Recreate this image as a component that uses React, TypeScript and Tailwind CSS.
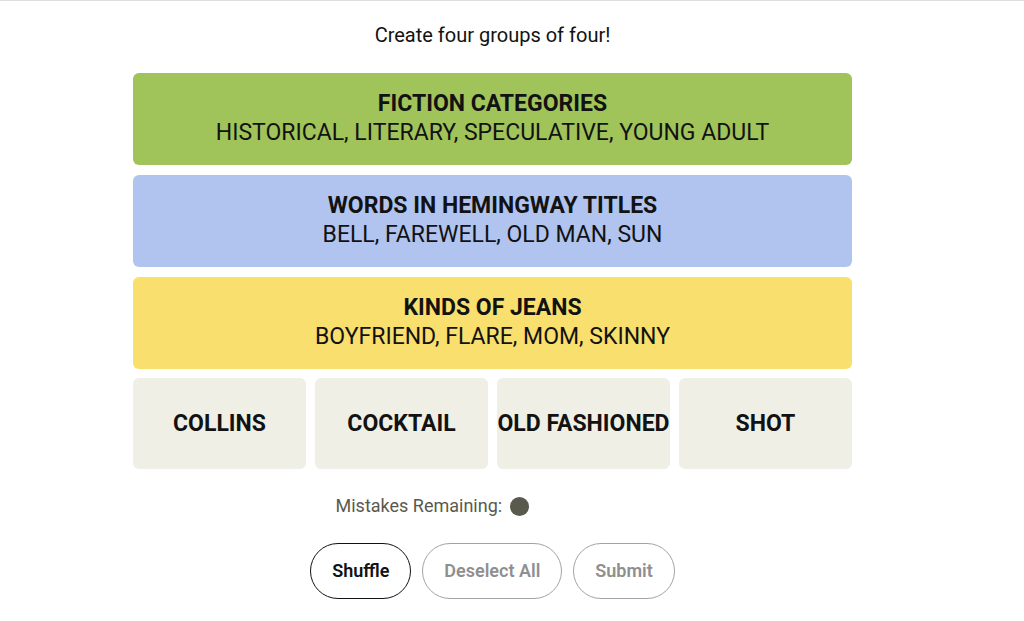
import { useState } from 'react'
import { cva } from 'class-variance-authority'
import { clsx } from 'clsx'

interface Group {
  title: string
  words: string[]
  color: 'green' | 'blue' | 'yellow'
}

const solvedGroups: Group[] = [
  { title: 'Fiction Categories', words: ['Historical', 'Literary', 'Speculative', 'Young Adult'], color: 'green' },
  { title: 'Words in Hemingway Titles', words: ['Bell', 'Farewell', 'Old Man', 'Sun'], color: 'blue' },
  { title: 'Kinds of Jeans', words: ['Boyfriend', 'Flare', 'Mom', 'Skinny'], color: 'yellow' },
]

const solvedCard = cva(
  'flex min-h-[92px] flex-col items-center justify-center rounded-md px-2 pb-0.5 text-center text-[23px] leading-[29px] uppercase',
  {
    variants: {
      color: {
        green: 'bg-[#a0c35a]',
        blue: 'bg-[#b0c4ef]',
        yellow: 'bg-[#f9df6d]',
      },
    },
  }
)

const pill =
  'h-14 rounded-full border px-[21px] pb-0.5 text-[18px] font-semibold border-[#121212] text-[#121212] disabled:border-[#a3a3a3] disabled:text-[#8f8f8f]'

export default function App() {
  const [words, setWords] = useState(['Collins', 'Cocktail', 'Old Fashioned', 'Shot'])
  const [selected, setSelected] = useState<string[]>([])
  const mistakesRemaining = 1

  const toggle = (word: string) => {
    setSelected((prev) => (prev.includes(word) ? prev.filter((w) => w !== word) : [...prev, word]))
  }

  const shuffle = () => {
    setWords((prev) => [...prev].sort(() => Math.random() - 0.5))
  }

  return (
    <main className="flex flex-col items-center border-t border-[#dfdfdf] bg-white pt-5 pb-5 pr-[39px] font-['Roboto','Liberation_Sans',sans-serif] text-[#121212]">
      <h1 className="text-[20px] leading-7">Create four groups of four!</h1>

      <div className="mt-6 flex w-full max-w-[719px] flex-col gap-[9px]">
        <div className="flex flex-col gap-2.5">
          {solvedGroups.map((group) => (
            <section key={group.title} className={solvedCard({ color: group.color })}>
              <h2 className="font-bold">{group.title}</h2>
              <p>{group.words.join(', ')}</p>
            </section>
          ))}
        </div>

        <div className="grid grid-cols-4 gap-[9px]">
          {words.map((word) => (
            <button
              key={word}
              type="button"
              aria-pressed={selected.includes(word)}
              onClick={() => toggle(word)}
              className={clsx(
                'h-[91px] rounded-md text-[23px] leading-[29px] font-bold whitespace-nowrap uppercase',
                selected.includes(word) ? 'bg-[#5a594e] text-white' : 'bg-[#efefe6]'
              )}
            >
              {word}
            </button>
          ))}
        </div>
      </div>

      <div className="mt-6 flex w-full max-w-[314px] items-center gap-2 text-[18px] leading-[26px] text-[#5a594e]">
        <p>Mistakes Remaining:</p>
        {Array.from({ length: mistakesRemaining }, (_, i) => (
          <span key={i} className="size-[19px] rounded-full bg-[#5a594e]" />
        ))}
      </div>

      <div className="mt-6 flex gap-[11px]">
        <button type="button" onClick={shuffle} className={pill}>
          Shuffle
        </button>
        <button type="button" disabled={selected.length === 0} onClick={() => setSelected([])} className={pill}>
          Deselect All
        </button>
        <button type="button" disabled={selected.length < 4} className={pill}>
          Submit
        </button>
      </div>
    </main>
  )
}
